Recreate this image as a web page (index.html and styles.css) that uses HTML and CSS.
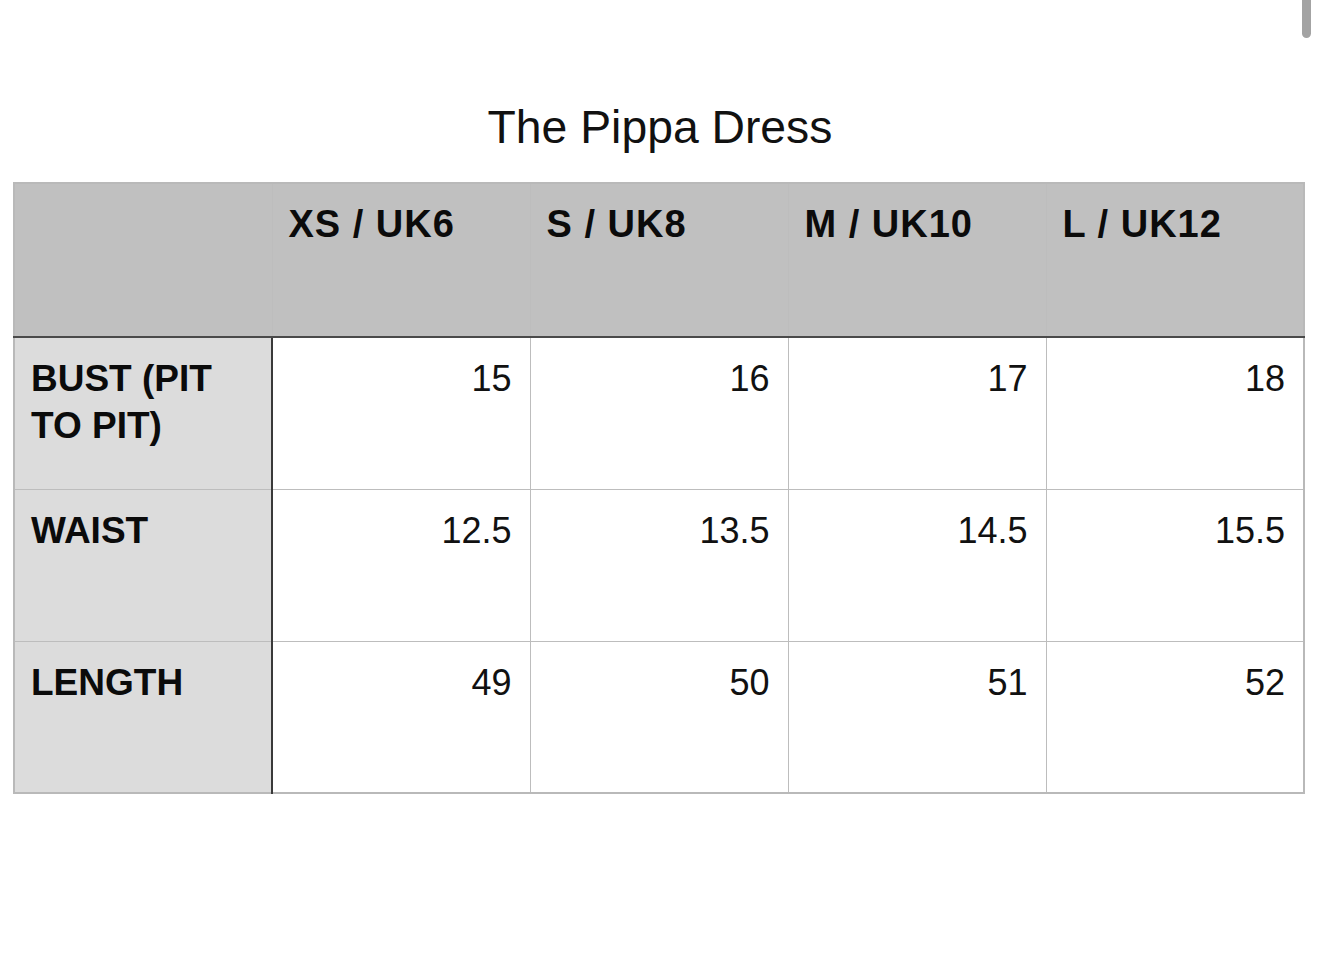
FILE: index.html
```html
<!DOCTYPE html>
<html>
<head>
<meta charset="utf-8">
<link rel="stylesheet" href="styles.css">
</head>
<body>
<div class="scrollbar"></div>
<h1 class="title">The Pippa Dress</h1>
<table class="sizes">
  <colgroup>
    <col class="c-label"><col class="c-val"><col class="c-val"><col class="c-val"><col class="c-val">
  </colgroup>
  <thead>
    <tr>
      <th class="corner"></th>
      <th>XS / UK6</th>
      <th>S / UK8</th>
      <th>M / UK10</th>
      <th>L / UK12</th>
    </tr>
  </thead>
  <tbody>
    <tr>
      <th class="label">BUST (PIT<br>TO PIT)</th>
      <td>15</td><td>16</td><td>17</td><td>18</td>
    </tr>
    <tr>
      <th class="label">WAIST</th>
      <td>12.5</td><td>13.5</td><td>14.5</td><td>15.5</td>
    </tr>
    <tr class="last">
      <th class="label">LENGTH</th>
      <td>49</td><td>50</td><td>51</td><td>52</td>
    </tr>
  </tbody>
</table>
</body>
</html>
```
FILE: styles.css
```css
html, body {
  margin: 0;
  padding: 0;
  background: #ffffff;
}
body {
  font-family: "Liberation Sans", Arial, Helvetica, sans-serif;
  color: #111;
  width: 1320px;
  height: 956px;
  overflow: hidden;
}
.scrollbar {
  position: fixed;
  top: -6px;
  left: 1302px;
  width: 9px;
  height: 44px;
  border-radius: 5px;
  background: #a3a3a3;
}
.title {
  margin: 99px 0 0 0;
  height: 56px;
  line-height: 56px;
  font-size: 46.3px;
  font-weight: normal;
  text-align: center;
  color: #111;
}
.sizes {
  margin: 27px 0 0 13px;
  border-collapse: collapse;
  table-layout: fixed;
  width: 1291px;
  border: 2px solid #b9b9b9;
}
.c-label { width: 258px; }
.c-val { width: 258px; }
.sizes th,
.sizes td {
  border: 1px solid #bdbdbd;
  vertical-align: top;
  padding: 17px 17px 0 16px;
  line-height: 47px;
  box-sizing: border-box;
}
.sizes thead tr { height: 154px; }
.sizes thead th {
  background: #c0c0c0;
  font-size: 38px;
  font-weight: bold;
  text-align: left;
  letter-spacing: 1px;
  border-bottom: 2px solid #4a4a4a;
  color: #0b0b0b;
}
.sizes tbody tr { height: 152px; }
.sizes tbody .label {
  background: #dcdcdc;
  font-size: 37px;
  font-weight: bold;
  text-align: left;
  border-right: 2px solid #3a3a3a;
  color: #0b0b0b;
  padding-left: 16px;
}
.sizes td {
  background: #fff;
  font-size: 36px;
  text-align: right;
  padding-right: 18px;
}
```
